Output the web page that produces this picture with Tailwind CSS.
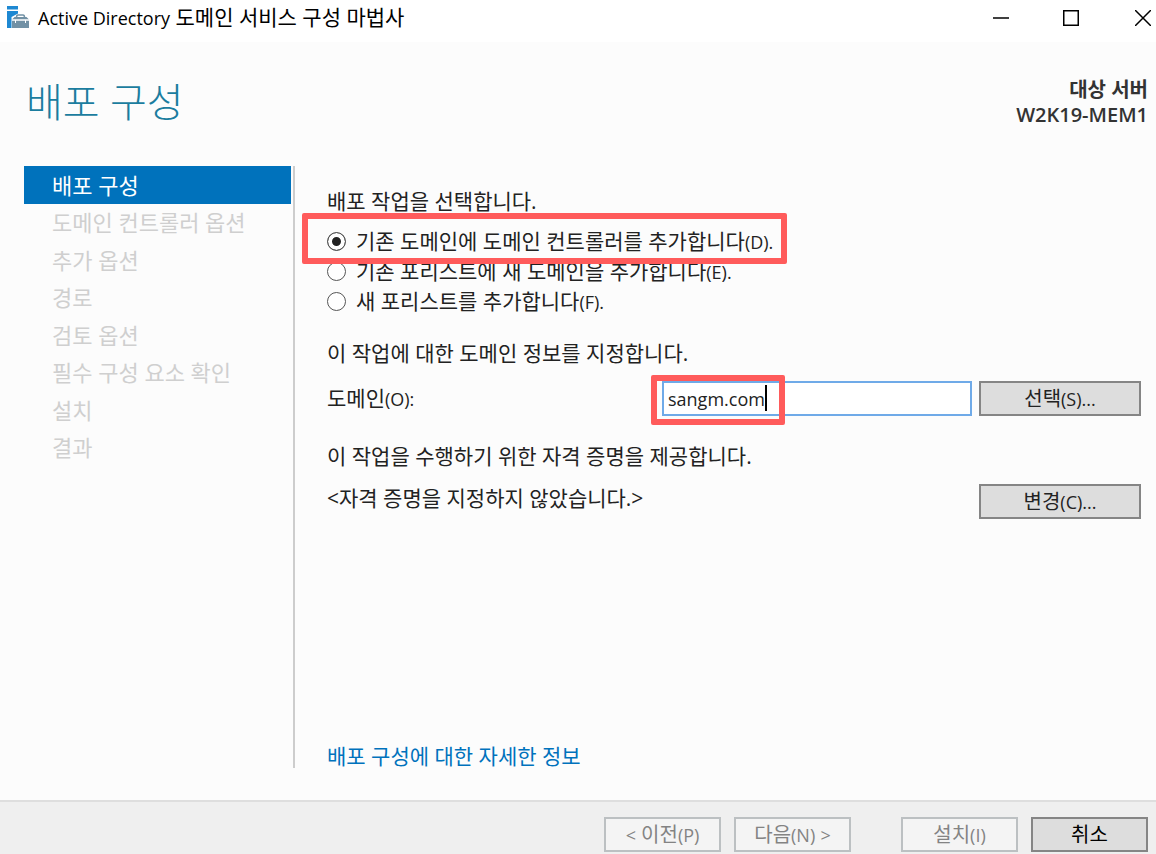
<!DOCTYPE html>
<html lang="ko">
<head>
<meta charset="utf-8">
<title>Active Directory 도메인 서비스 구성 마법사</title>
<script src="https://cdn.jsdelivr.net/npm/@tailwindcss/browser@4"></script>
</head>
<body class="flex min-h-screen flex-col bg-[#fcfcfc] font-['Open_Sans','Noto_Sans_CJK_KR',sans-serif] text-[21px] leading-[30px] text-[#222]">

<header class="flex h-[42px] items-start bg-white pl-1.5 text-black">
  <svg class="mt-1.5 h-[22px] w-6 shrink-0" viewBox="0 0 24 22" aria-hidden="true">
    <path fill="#1e88d2" d="M1 0h11v3.500H1zM1 5h11v2.500L5.500 11v11H1z"/>
    <path fill="#7291a5" d="M6 14.500h17V22H6zM6 13.500L8.500 11h12l2.500 2.500z"/>
    <path fill="none" stroke="#7291a5" stroke-width="1.500" d="M10.500 11.500q0-2.500 1.500-2.500h5q1.500 0 1.500 2.500"/>
    <path fill="none" stroke="#fff" stroke-width="1" d="M6 14h17M9.500 14v3M19.500 14v3"/>
  </svg>
  <span class="ml-2 mt-0.5"><span class="text-lg/[30px]">Active Directory</span> 도메인 서비스 구성 마법사</span>
  <div class="ml-auto flex">
    <button type="button" aria-label="최소화" class="flex h-9 w-[70px] items-center justify-center"><svg class="size-4" viewBox="0 0 16 16"><path d="M0 8h16" stroke="currentColor" stroke-width="1.500"/></svg></button>
    <button type="button" aria-label="최대화" class="flex h-9 w-[70px] items-center justify-center"><svg class="size-4" viewBox="0 0 16 16"><path d="M.75.75h14.500v14.500H.75z" fill="none" stroke="currentColor" stroke-width="1.500"/></svg></button>
    <button type="button" aria-label="닫기" class="flex h-9 w-[50px] items-center justify-end pr-[5px]"><svg class="size-4" viewBox="0 0 16 16"><path d="M0 0l16 16M16 0L0 16" stroke="currentColor" stroke-width="1.500"/></svg></button>
  </div>
</header>

<div class="flex h-[124px] items-start justify-between pl-[26px] pr-2 pt-[35px]">
  <h1 class="text-[40px] font-light leading-[50px] text-[#1b7d9f]">배포 구성</h1>
  <div class="text-right text-[20px] font-semibold leading-[25px] text-[#333]">
    <p class="font-bold">대상 서버</p>
    <p>W2K19-MEM1</p>
  </div>
</div>

<main class="flex flex-1 pb-8 pl-6 pr-[15px]">
  <nav aria-label="마법사 단계" class="w-[271px] shrink-0 border-r-2 border-[#cdcdcd] pr-0.5">
    <ol class="grid h-75 grid-rows-8 text-[22px] text-[#cfcfcf]">
      <li aria-current="step" class="flex items-center bg-[#0072bc] pl-7 text-white">배포 구성</li>
      <li class="flex items-center pl-7">도메인 컨트롤러 옵션</li>
      <li class="flex items-center pl-7">추가 옵션</li>
      <li class="flex items-center pl-7">경로</li>
      <li class="flex items-center pl-7">검토 옵션</li>
      <li class="flex items-center pl-7">필수 구성 요소 확인</li>
      <li class="flex items-center pl-7">설치</li>
      <li class="flex items-center pl-7">결과</li>
    </ol>
  </nav>

  <form class="flex flex-1 flex-col pl-8 pt-5">
    <fieldset class="flex flex-col items-start">
      <legend class="mb-2.5">배포 작업을 선택합니다.</legend>
      <label class="relative flex h-[30px] items-center gap-2.5">
        <input type="radio" name="op" checked class="size-[19px] appearance-none rounded-full border border-[#555] bg-white checked:bg-[#222] checked:shadow-[inset_0_0_0_4px_white]">
        <span>기존 도메인에 도메인 컨트롤러를 추가합니다<span class="text-lg/[30px]">(D).</span></span>
        <span class="absolute -bottom-2 -left-[25px] -right-3.5 -top-[13px] z-10 rounded-xs border-6 border-[#ff5b5b]"></span>
      </label>
      <label class="flex h-[30px] items-center gap-2.5">
        <input type="radio" name="op" class="size-[19px] appearance-none rounded-full border border-[#555] bg-white checked:bg-[#222] checked:shadow-[inset_0_0_0_4px_white]">
        <span>기존 포리스트에 새 도메인을 추가합니다<span class="text-lg/[30px]">(E).</span></span>
      </label>
      <label class="flex h-[30px] items-center gap-2.5">
        <input type="radio" name="op" class="size-[19px] appearance-none rounded-full border border-[#555] bg-white checked:bg-[#222] checked:shadow-[inset_0_0_0_4px_white]">
        <span>새 포리스트를 추가합니다<span class="text-lg/[30px]">(F).</span></span>
      </label>
    </fieldset>

    <p class="mt-[22px]">이 작업에 대한 도메인 정보를 지정합니다.</p>
    <div class="mt-[13px] flex h-[35px] items-center">
      <label for="domain" class="flex-1">도메인<span class="text-lg/[30px]">(O):</span></label>
      <div class="relative h-full w-[310px]">
        <input id="domain" type="text" value="sangm.com" class="h-full w-full border-2 border-[#6faae8] bg-white px-1 text-lg">
        <span class="absolute left-[103px] top-1 h-[26px] w-0.5 bg-black"></span>
        <span class="absolute -left-[11px] -top-1.5 z-10 h-[50px] w-[134px] rounded-xs border-6 border-[#ff5b5b]"></span>
      </div>
      <button type="button" class="ml-[7px] h-full w-[162px] border-2 border-[#858585] bg-[#ddd] text-[20px]">선택<span class="text-lg/[30px]">(S)...</span></button>
    </div>

    <p class="mt-[25px]">이 작업을 수행하기 위한 자격 증명을 제공합니다.</p>
    <div class="mt-[13px] flex items-start justify-between">
      <p class="leading-7">&lt;자격 증명을 지정하지 않았습니다.&gt;</p>
      <button type="button" class="h-[35px] w-[162px] border-2 border-[#858585] bg-[#ddd] text-[20px]">변경<span class="text-lg/[30px]">(C)...</span></button>
    </div>

    <a href="#" class="mt-auto self-start leading-6 text-[#0072bc]">배포 구성에 대한 자세한 정보</a>
  </form>
</main>

<footer class="flex justify-end border-t-2 border-[#dedede] bg-[#efefef] pb-0.5 pr-2 pt-[15px] text-[20px]">
  <button type="button" disabled class="h-[35px] w-[117px] border-2 border-[#bcc0c2] bg-[#f4f4f4] text-[#838383]"><span class="text-lg/[30px]">&lt;</span> 이전<span class="text-lg/[30px]">(P)</span></button>
  <button type="button" disabled class="ml-[13px] h-[35px] w-[117px] border-2 border-[#bcc0c2] bg-[#f4f4f4] text-[#838383]">다음<span class="text-lg/[30px]">(N)</span> <span class="text-lg/[30px]">&gt;</span></button>
  <button type="button" disabled class="ml-[50px] h-[35px] w-[117px] border-2 border-[#bcc0c2] bg-[#f4f4f4] text-[#838383]">설치<span class="text-lg/[30px]">(I)</span></button>
  <button type="button" class="ml-[13px] h-[35px] w-[117px] border-2 border-[#858585] bg-[#ddd] text-black">취소</button>
</footer>
</body>
</html>
